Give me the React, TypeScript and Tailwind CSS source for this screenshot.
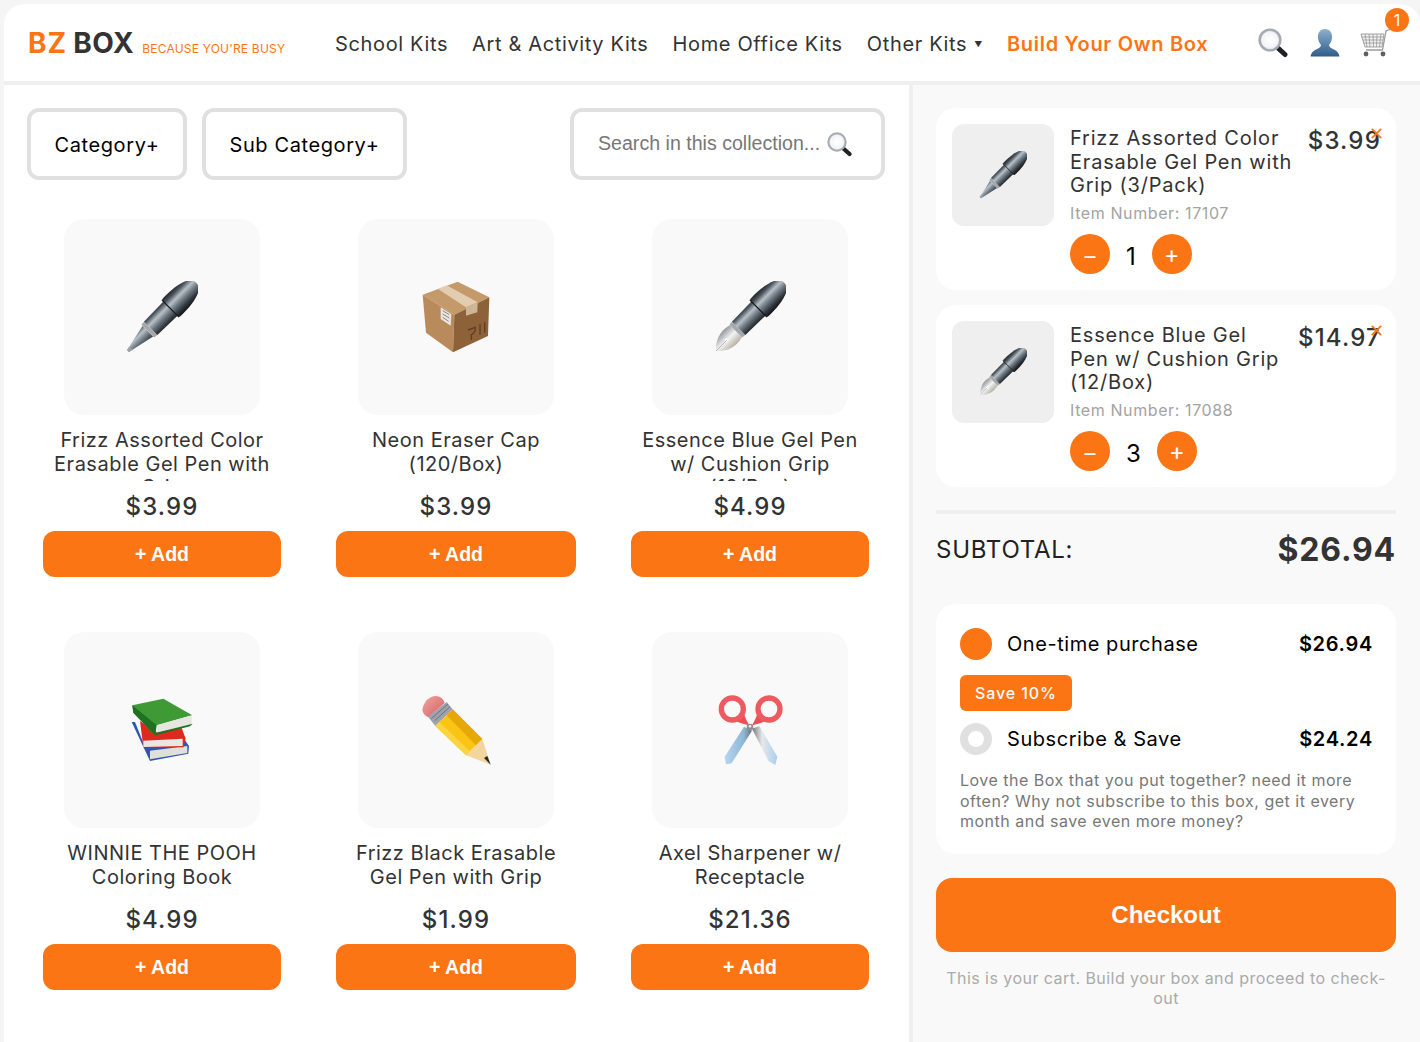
import type { ReactNode } from "react";

// ---------------------------------------------------------------------------
// Drawn pictures (viewBoxes are in 3x reference units, so size = box / 3)
// ---------------------------------------------------------------------------
function Steel({ id }: { id: string }) {
  return (
    <defs>
      <linearGradient id={id} gradientUnits="userSpaceOnUse" x1="0" y1="-13" x2="0" y2="13">
        <stop offset="0" stopColor="#1f2226" />
        <stop offset="0.18" stopColor="#4a535c" />
        <stop offset="0.38" stopColor="#b8c0c7" />
        <stop offset="0.55" stopColor="#78838d" />
        <stop offset="0.8" stopColor="#32383f" />
        <stop offset="1" stopColor="#0e1013" />
      </linearGradient>
      <linearGradient id={`${id}-nib`} gradientUnits="userSpaceOnUse" x1="0" y1="-12" x2="0" y2="12">
        <stop offset="0" stopColor="#7c8185" />
        <stop offset="0.5" stopColor="#f2f3f4" />
        <stop offset="1" stopColor="#a89f90" />
      </linearGradient>
    </defs>
  );
}

function PenBody({ id }: { id: string }) {
  return (
    <>
      <path d="M28 -9 L32 -9.5 L32 9.5 L28 9 Z" fill="#a4a8ac" />
      <path d="M32 -9.5 L60 -10 L60 10 L32 9.5 Z" fill={`url(#${id})`} />
      <path d="M60 -12 L62 -12.5 C76 -13 88 -11 95 -6 C97 -3 97 3 95 6 C88 11 76 13 62 12.5 L60 12 Z" fill={`url(#${id})`} />
      <path d="M60 -12 L60 12" stroke="#111316" strokeWidth="1.2" />
    </>
  );
}

function Pen({ size, id }: { size: number; id: string }) {
  return (
    <svg width={size} height={size} viewBox="0 0 72 72">
      <Steel id={id} />
      <g transform="translate(2 70) rotate(-45)">
        <path d="M0 -1.5 L5 -2.5 L28 -7.5 L28 7.5 L5 2.5 L0 1.5 Z" fill={`url(#${id})`} />
        <path d="M0 -1.5 L4 -2 L4 2 L0 1.5 Z" fill="#9da2a7" />
        <PenBody id={id} />
      </g>
    </svg>
  );
}

function NibPen({ size, id }: { size: number; id: string }) {
  return (
    <svg width={size} height={size} viewBox="0 0 72 72">
      <Steel id={id} />
      <g transform="translate(2 70) rotate(-45)">
        <path d="M0 0 C6 -7 16 -12 28 -8.5 L28 8.5 C16 12 6 7 0 0 Z" fill={`url(#${id}-nib)`} />
        <circle cx="15" cy="0" r="2" fill="#ffffff" />
        <path d="M0 0 L15 0" stroke="#8f8f8f" strokeWidth="0.6" />
        <PenBody id={id} />
      </g>
    </svg>
  );
}

function BoxPic() {
  return (
    <svg width="68" height="72" viewBox="1148 211 204 216">
      <path d="M1255 213 L1350 260 L1245 312 L1150 252 Z" fill="#c59a6b" />
      <path d="M1150 252 L1245 312 L1241 425 L1160 366 Z" fill="#b98a5c" />
      <path d="M1245 312 L1350 260 L1346 376 L1241 425 Z" fill="#8d6239" />
      <path d="M1196 235 L1222 224 L1315 275 L1280 290 Z" fill="#e2cdb0" />
      <path d="M1280 290 L1315 275 L1314 305 L1280 315 Z" fill="#cdb596" />
      <path d="M1204 290 L1236 310 L1234 345 L1204 325 Z" fill="#e9e6e0" />
      <path d="M1210 300 L1230 312 M1210 310 L1230 322 M1210 320 L1228 332" stroke="#8a8a8a" strokeWidth="3" />
      <path d="M1286 358 L1308 350 C1308 365 1302 370 1296 372 L1296 388 M1322 340 L1322 372 M1336 334 L1336 366" stroke="#5e3f22" strokeWidth="4" fill="none" />
    </svg>
  );
}

function BooksPic() {
  return (
    <svg width="64" height="66" viewBox="90 75 192 198">
      <path d="M95 150 L105 150 L135 225 L255 205 L267 222 L265 245 L150 267 Z" fill="#2f55b5" />
      <path d="M150 236 L262 222 L262 243 L150 262 Z" fill="#dfe0dc" />
      <path d="M120 147 L170 180 L245 168 L257 200 L250 226 L130 226 Z" fill="#dd2a1f" />
      <path d="M130 206 L248 200 L248 222 L130 225 Z" fill="#e9e7e2" />
      <path d="M97 100 L190 80 L277 130 L170 160 L165 190 L100 122 Z" fill="#3f9a36" />
      <path d="M97 100 L170 160 L165 190 L100 122 Z" fill="#1f7020" />
      <path d="M170 160 L275 130 L275 155 L170 183 Z" fill="#e6e6e0" />
      <path d="M166 183 L278 155 L270 163 L165 190 Z" fill="#1f7020" />
    </svg>
  );
}

function PencilPic() {
  return (
    <svg width="72" height="72" viewBox="960 70 216 216">
      <defs>
        <linearGradient id="pencil-eraser" x1="0" y1="0" x2="1" y2="1">
          <stop offset="0" stopColor="#f0a7a2" />
          <stop offset="1" stopColor="#d65c60" />
        </linearGradient>
      </defs>
      <path d="M967 118 C970 95 985 78 1005 76 C1020 75 1030 85 1034 97 L985 140 C975 135 968 128 967 118 Z" fill="url(#pencil-eraser)" />
      <path d="M984 138 L1040 94 L1058 116 L1006 166 Z" fill="#9da3aa" />
      <path d="M1004 150 L1050 108 M994 144 L1044 100" stroke="#6e7379" strokeWidth="3" />
      <path d="M1006 166 L1058 116 L1147 205 L1098 254 Z" fill="#f9c414" />
      <path d="M1040 134 L1058 116 L1147 205 L1128 224 Z" fill="#e5a807" />
      <path d="M1006 166 L1018 154 L1110 242 L1098 254 Z" fill="#fbd442" />
      <path d="M1098 254 L1147 205 L1172 282 Z" fill="#f3d59e" />
      <path d="M1152 262 L1162 256 L1172 282 Z" fill="#23252b" />
    </svg>
  );
}

function ScissorsPic() {
  return (
    <svg width="68" height="72" viewBox="78 68 204 216">
      <defs>
        <linearGradient id="blade-a" x1="0" y1="0" x2="1" y2="0">
          <stop offset="0" stopColor="#b4d6f2" />
          <stop offset="0.7" stopColor="#8fb6d6" />
          <stop offset="1" stopColor="#6f6f72" />
        </linearGradient>
        <linearGradient id="blade-b" x1="0" y1="0" x2="1" y2="0">
          <stop offset="0" stopColor="#77777a" />
          <stop offset="0.4" stopColor="#e6e8ea" />
          <stop offset="1" stopColor="#a8cfee" />
        </linearGradient>
      </defs>
      <path d="M162 166 L186 178 L125 276 L108 279 L104 256 Z" fill="url(#blade-a)" />
      <path d="M186 172 L208 164 L262 256 L256 281 L236 270 Z" fill="url(#blade-b)" />
      <path d="M178 162 C160 158 142 152 130 146 L160 120 C164 136 170 150 178 162 Z" fill="#e94f57" />
      <path d="M186 162 C204 158 222 152 234 146 L204 120 C200 136 194 150 186 162 Z" fill="#e94f57" />
      <circle cx="127" cy="113" r="33" fill="none" stroke="#ee5a60" strokeWidth="16" />
      <circle cx="237" cy="113" r="33" fill="none" stroke="#ee5a60" strokeWidth="16" />
      <circle cx="180" cy="167" r="10" fill="#8b8f93" />
      <circle cx="180" cy="165" r="4" fill="#e8eaec" />
    </svg>
  );
}

function SearchPic({ size, id }: { size: number; id: string }) {
  return (
    <svg width={size} height={size} viewBox="0 0 30 30">
      <defs>
        <radialGradient id={id}>
          <stop offset="0" stopColor="#ffffff" />
          <stop offset="0.75" stopColor="#f2f5f7" />
          <stop offset="1" stopColor="#c9d0d6" />
        </radialGradient>
      </defs>
      <path d="M20 20 L27 26.5" stroke="#1e2023" strokeWidth="5" strokeLinecap="round" />
      <circle cx="12" cy="12" r="10.4" fill={`url(#${id})`} stroke="#a4aaaf" strokeWidth="2.4" />
    </svg>
  );
}

function UserPic() {
  return (
    <svg width="30" height="30" viewBox="0 0 30 30">
      <defs>
        <linearGradient id="user-fill" x1="0" y1="0" x2="0" y2="1">
          <stop offset="0" stopColor="#8fb0cf" />
          <stop offset="1" stopColor="#2e5d8b" />
        </linearGradient>
      </defs>
      <path d="M15 1 C20 1 22.5 5 22 10 C21.6 13 20.5 15 19 17 C19 19 21 20 24 21.5 C27 23 29 25 29.5 28.5 L0.5 28.5 C1 25 3 23 6 21.5 C9 20 11 19 11 17 C9.5 15 8.4 13 8 10 C7.5 5 10 1 15 1 Z" fill="url(#user-fill)" />
    </svg>
  );
}

function CartPic() {
  return (
    <svg width="32" height="30" viewBox="0 0 32 30">
      <path d="M1 6 L24 6 L22 19 L5 19 Z" fill="#f1f1f1" stroke="#8e8e8e" strokeWidth="0.8" />
      <path d="M5 6 L7 19 M9 6 L10 19 M13 6 L13.5 19 M17 6 L16.5 19 M21 6 L19.5 19 M1.6 9 L23.5 9 M2.5 12 L23 12 M3.3 15 L22.5 15" stroke="#8e8e8e" strokeWidth="0.7" />
      <path d="M31 1 L26 3 L22.5 22 L6 22" fill="none" stroke="#9c9c9c" strokeWidth="1.3" />
      <circle cx="6" cy="26" r="2.4" fill="#5e5e5e" />
      <circle cx="23" cy="26" r="2.4" fill="#5e5e5e" />
    </svg>
  );
}

// ---------------------------------------------------------------------------
// Data
// ---------------------------------------------------------------------------
const NAV_LINKS = ["School Kits", "Art & Activity Kits", "Home Office Kits"];

const PRODUCTS: { title: string; price: string; pic: ReactNode }[] = [
  { title: "Frizz Assorted Color Erasable Gel Pen with Grip", price: "$3.99", pic: <Pen size={72} id="grid-pen" /> },
  { title: "Neon Eraser Cap (120/Box)", price: "$3.99", pic: <BoxPic /> },
  { title: "Essence Blue Gel Pen w/ Cushion Grip (12/Box)", price: "$4.99", pic: <NibPen size={72} id="grid-nib" /> },
  { title: "WINNIE THE POOH Coloring Book", price: "$4.99", pic: <BooksPic /> },
  { title: "Frizz Black Erasable Gel Pen with Grip", price: "$1.99", pic: <PencilPic /> },
  { title: "Axel Sharpener w/ Receptacle", price: "$21.36", pic: <ScissorsPic /> },
];

const CART_ITEMS: { title: string; number: string; price: string; qty: number; pic: ReactNode }[] = [
  { title: "Frizz Assorted Color Erasable Gel Pen with Grip (3/Pack)", number: "17107", price: "$3.99", qty: 1, pic: <Pen size={48} id="cart-pen" /> },
  { title: "Essence Blue Gel Pen w/ Cushion Grip (12/Box)", number: "17088", price: "$14.97", qty: 3, pic: <NibPen size={48} id="cart-nib" /> },
];

// ---------------------------------------------------------------------------
// Pieces
// ---------------------------------------------------------------------------
function Header() {
  return (
    <header className="h-[77px] box-content flex items-center bg-white rounded-t-[20px] border-b-4 border-[#efefef] shrink-0">
      <div className="flex items-baseline w-[331px] pl-[24px] pt-[1px] whitespace-nowrap">
        <span className="text-[28px] font-bold tracking-[1px] text-[#fb7514]">BZ</span>
        <span className="text-[28px] font-bold tracking-[0.6px] text-[#333333] ml-[6px]">BOX</span>
        <span className="text-[12px] tracking-[0.2px] text-[#fb7514] ml-[8px]">BECAUSE YOU'RE BUSY</span>
      </div>
      <nav className="flex items-center gap-[24px] pt-[2px] text-[20px] tracking-[0.64px] text-[#333333] whitespace-nowrap">
        {NAV_LINKS.map((link) => (
          <span key={link}>{link}</span>
        ))}
        <span className="flex items-center">
          Other Kits
          <span className="text-[8px] ml-[7px] text-[#333333]">▼</span>
        </span>
        <span className="font-semibold tracking-[0.7px] text-[#fb7514]">Build Your Own Box</span>
      </nav>
      <div className="flex items-center ml-auto pr-[28px] gap-[22px]">
        <SearchPic size={30} id="head-search" />
        <UserPic />
        <div className="relative ml-[-2px]">
          <CartPic />
          <span className="absolute -top-[20px] left-[25px] w-[24px] h-[24px] rounded-full bg-[#fb7514] text-white text-[16px] flex items-center justify-center">
            1
          </span>
        </div>
      </div>
    </header>
  );
}

function Filters() {
  return (
    <div className="flex items-start pl-[23px]">
      <button className="h-[72px] w-[160px] pt-[1px] border-4 border-[#e0e0e0] rounded-[12px] text-[20px] tracking-[0.6px] text-black">
        Category+
      </button>
      <button className="h-[72px] w-[205px] ml-[15px] pt-[1px] border-4 border-[#e0e0e0] rounded-[12px] text-[20px] tracking-[0.6px] text-black">
        Sub Category+
      </button>
      <div className="h-[72px] w-[315px] ml-[163px] border-4 border-[#e0e0e0] rounded-[12px] flex items-center pl-[24px] text-[19.6px] text-[#777777] whitespace-nowrap font-['Liberation_Sans',sans-serif]">
        <span>Search in this collection...</span>
        <span className="ml-[7px] flex">
          <SearchPic size={25} id="box-search" />
        </span>
      </div>
    </div>
  );
}

function ProductCard({ title, price, pic }: { title: string; price: string; pic: ReactNode }) {
  return (
    <div className="flex flex-col items-center">
      <div className="w-[196px] h-[196px] rounded-[20px] bg-[#f9f9f9] flex items-center justify-center">{pic}</div>
      <div className="mt-[14px] h-[52px] w-full px-[9px] overflow-hidden text-center text-[20px] leading-[23.5px] tracking-[0.5px] text-[#333333]">
        {title}
      </div>
      <div className="mt-[8px] h-[36px] flex items-center text-[24px] font-medium tracking-[1.1px] text-[#333333]">{price}</div>
      <button className="mt-[6px] pt-[1px] w-full h-[46px] rounded-[12px] bg-[#fb7514] text-white text-[19.5px] font-bold font-['Liberation_Sans',sans-serif]">+ Add</button>
    </div>
  );
}

function CartRow({ title, number, price, qty, pic }: { title: string; number: string; price: string; qty: number; pic: ReactNode }) {
  return (
    <div className="relative h-[182px] rounded-[20px] bg-white p-[16px] flex">
      <div className="w-[102px] h-[102px] rounded-[12px] bg-[#efefef] flex items-center justify-center shrink-0">{pic}</div>
      <div className="ml-[16px] flex-1 min-w-0">
        <div className="flex items-start">
          <div className="flex-1 min-w-0 text-[20px] leading-[23.5px] tracking-[0.8px] text-[#333333] pt-[3px]">{title}</div>
          <div className="text-[24px] font-medium tracking-[1.2px] text-[#333333] mr-[-1px] ml-[10px] -mt-[1px]">{price}</div>
        </div>
        <div className="mt-[5px] text-[16px] leading-[20px] tracking-[0.6px] text-[#a3a3a3]">Item Number: {number}</div>
        <div className="mt-[10px] flex items-center">
          <span className="w-[40px] h-[40px] rounded-full bg-[#fb7514] text-white flex items-center justify-center text-[22px] pt-[5px]">–</span>
          <span className="mx-[16px] pt-[6px] text-[24px] text-black">{qty}</span>
          <span className="w-[40px] h-[40px] rounded-full bg-[#fb7514] text-white flex items-center justify-center text-[24px] pt-[3px]">+</span>
        </div>
      </div>
      <span className="absolute top-[14px] right-[12px] text-[#fb7514] text-[18px] leading-[24px]">✕</span>
    </div>
  );
}

function PurchaseOptions() {
  return (
    <div className="mt-[33px] h-[250px] rounded-[20px] bg-white pt-[24px] pl-[24px] pr-[23px]">
      <div className="flex items-center text-[20px] tracking-[0.55px] text-black">
        <span className="w-[32px] h-[32px] rounded-full bg-[#fb7514]" />
        <span className="ml-[15px] flex-1">One-time purchase</span>
        <span className="font-semibold tracking-[0.7px]">$26.94</span>
      </div>
      <div className="mt-[15px] w-[112px] h-[36px] rounded-[6px] bg-[#fb7514] text-white text-[16px] font-medium tracking-[0.9px] flex items-center justify-center">
        Save 10%
      </div>
      <div className="mt-[12px] flex items-center text-[20px] tracking-[0.55px] text-black">
        <span className="w-[32px] h-[32px] rounded-full border-[8px] border-[#e0e0e0]" />
        <span className="ml-[15px] flex-1">Subscribe &amp; Save</span>
        <span className="font-semibold tracking-[0.7px]">$24.24</span>
      </div>
      <p className="mt-[15px] text-[16px] leading-[20.5px] tracking-[0.5px] text-[#777777]">
        Love the Box that you put together? need it more often? Why not subscribe to this box, get it every month and save even more money?
      </p>
    </div>
  );
}

// ---------------------------------------------------------------------------
// Page
// ---------------------------------------------------------------------------
export default function App() {
  return (
    <div className="h-[1042px] overflow-hidden bg-[#f5f5f5] pt-[4px] pl-[4px] flex flex-col font-['Inter',sans-serif]">
      <Header />
      <div className="flex flex-1 min-h-0">
        <main className="w-[905px] bg-white pt-[23px] shrink-0">
          <Filters />
          <div className="grid grid-cols-[238px_240px_238px] gap-x-[55px] gap-y-[55px] pl-[39px] mt-[39px]">
            {PRODUCTS.map((product) => (
              <ProductCard key={product.title} {...product} />
            ))}
          </div>
        </main>
        <aside className="flex-1 bg-[#f9f9f9] border-l-4 border-[#efefef] pl-[23px] pr-[24px] pt-[23px]">
          <div className="flex flex-col gap-[15px]">
            {CART_ITEMS.map((item) => (
              <CartRow key={item.number} {...item} />
            ))}
          </div>
          <div className="mt-[23px] h-[4px] bg-[#efefef]" />
          <div className="mt-[15px] h-[42px] flex items-center justify-between">
            <span className="text-[24px] tracking-[0.75px] text-[#222222]">SUBTOTAL:</span>
            <span className="text-[32px] font-bold tracking-[0.8px] text-[#333333]">$26.94</span>
          </div>
          <PurchaseOptions />
          <button className="mt-[24px] w-full h-[74px] rounded-[16px] bg-[#fb7514] text-white text-[24px] font-bold font-['Liberation_Sans',sans-serif]">Checkout</button>
          <p className="mt-[16px] text-center text-[16px] leading-[20px] tracking-[0.45px] text-[#aaaaaa]">
            This is your cart. Build your box and proceed to check-out
          </p>
        </aside>
      </div>
    </div>
  );
}
